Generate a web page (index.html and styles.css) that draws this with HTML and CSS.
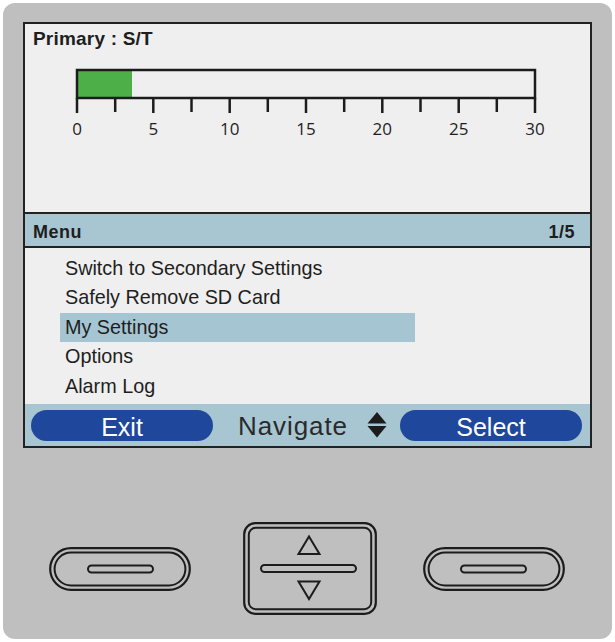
FILE: index.html
```html
<!DOCTYPE html>
<html lang="en">
<head>
<meta charset="utf-8">
<title>Menu</title>
<link rel="stylesheet" href="styles.css">
</head>
<body>
<div class="device">
  <div class="screen">
    <div class="status">
      <div class="title">Primary : S/T</div>
      <svg class="gauge" width="480" height="74" viewBox="0 0 480 74">
        <rect x="7" y="4" width="55" height="28" fill="#4caf47"/>
        <rect x="7" y="4" width="458" height="28" fill="none" stroke="#1c1c1c" stroke-width="2.5"/>
        <g stroke="#1c1c1c" stroke-width="2.5">
          <line x1="7" y1="32" x2="7" y2="47"/>
          <line x1="45.2" y1="32" x2="45.2" y2="46"/>
          <line x1="83.3" y1="32" x2="83.3" y2="47"/>
          <line x1="121.5" y1="32" x2="121.5" y2="46"/>
          <line x1="159.7" y1="32" x2="159.7" y2="47"/>
          <line x1="197.8" y1="32" x2="197.8" y2="46"/>
          <line x1="236" y1="32" x2="236" y2="47"/>
          <line x1="274.2" y1="32" x2="274.2" y2="46"/>
          <line x1="312.3" y1="32" x2="312.3" y2="47"/>
          <line x1="350.5" y1="32" x2="350.5" y2="46"/>
          <line x1="388.7" y1="32" x2="388.7" y2="47"/>
          <line x1="426.8" y1="32" x2="426.8" y2="46"/>
          <line x1="465" y1="32" x2="465" y2="47"/>
        </g>
        <g class="scale" text-anchor="middle">
          <text x="7" y="68.5">0</text>
          <text x="83.3" y="68.5">5</text>
          <text x="159.7" y="68.5">10</text>
          <text x="236" y="68.5">15</text>
          <text x="312.3" y="68.5">20</text>
          <text x="388.7" y="68.5">25</text>
          <text x="465" y="68.5">30</text>
        </g>
      </svg>
    </div>
    <div class="menu-head">
      <span>Menu</span>
      <span>1/5</span>
    </div>
    <ul class="menu-list">
      <li class="item">Switch to Secondary Settings</li>
      <li class="item">Safely Remove SD Card</li>
      <li class="item selected">My Settings</li>
      <li class="item">Options</li>
      <li class="item">Alarm Log</li>
    </ul>
    <div class="softkeys">
      <div class="pill">Exit</div>
      <div class="nav">
        <span class="nav-label">Navigate</span>
        <svg class="nav-icon" width="20" height="26" viewBox="0 0 20 26">
          <polygon points="10,0 19.5,11.5 0.5,11.5" fill="#1c1c1c"/>
          <polygon points="0.5,14 19.5,14 10,25.5" fill="#1c1c1c"/>
        </svg>
      </div>
      <div class="pill">Select</div>
    </div>
  </div>
  <div class="keys">
    <svg class="key key-left" width="142" height="44" viewBox="0 0 142 44">
      <rect x="1.2" y="1.2" width="139.6" height="41.6" rx="20.8" fill="none" stroke="#1c1c1c" stroke-width="2.2"/>
      <rect x="5.6" y="5.6" width="130.8" height="32.8" rx="16.4" fill="none" stroke="#1c1c1c" stroke-width="2"/>
      <rect x="39" y="18.5" width="65" height="7" rx="3.5" fill="none" stroke="#1c1c1c" stroke-width="2"/>
    </svg>
    <svg class="key key-mid" width="134" height="93" viewBox="0 0 134 93">
      <rect x="1.2" y="1.2" width="131.6" height="90.6" rx="11" fill="none" stroke="#1c1c1c" stroke-width="2.2"/>
      <rect x="5.8" y="5.8" width="122.4" height="81.4" rx="7" fill="none" stroke="#1c1c1c" stroke-width="2"/>
      <polygon points="66,14.5 76.5,32 55.5,32" fill="none" stroke="#1c1c1c" stroke-width="2"/>
      <polygon points="55.5,59.5 76.5,59.5 66,77" fill="none" stroke="#1c1c1c" stroke-width="2"/>
      <rect x="18" y="43" width="95" height="7" rx="3.5" fill="none" stroke="#1c1c1c" stroke-width="2"/>
    </svg>
    <svg class="key key-right" width="142" height="44" viewBox="0 0 142 44">
      <rect x="1.2" y="1.2" width="139.6" height="41.6" rx="20.8" fill="none" stroke="#1c1c1c" stroke-width="2.2"/>
      <rect x="5.6" y="5.6" width="130.8" height="32.8" rx="16.4" fill="none" stroke="#1c1c1c" stroke-width="2"/>
      <rect x="38" y="18.5" width="65" height="7" rx="3.5" fill="none" stroke="#1c1c1c" stroke-width="2"/>
    </svg>
  </div>
</div>
</body>
</html>
```

FILE: styles.css
```css
html, body {
  margin: 0;
  padding: 0;
  background: #ffffff;
}

body {
  font-family: "Liberation Sans", Arial, sans-serif;
  color: #222222;
}

.device {
  box-sizing: border-box;
  margin: 3px 0 0 3px;
  width: 609px;
  height: 636px;
  background: #c0bfc0;
  border-radius: 12px;
  padding: 19px 0 0 20px;
}

.screen {
  box-sizing: border-box;
  width: 569px;
  height: 426px;
  border: 2px solid #222222;
  background: #efefef;
  display: flex;
  flex-direction: column;
}

.status {
  box-sizing: border-box;
  height: 188px;
  padding: 4px 8px 0 8px;
}

.title {
  font-weight: bold;
  font-size: 19px;
  line-height: 22px;
  color: #1e1e1e;
  letter-spacing: 0.2px;
}

.gauge {
  display: block;
  margin: 16px 0 0 37px;
}

.scale text {
  font-family: "Open Sans", "Liberation Sans", sans-serif;
  font-size: 17px;
  fill: #1e1e1e;
}

.menu-head {
  box-sizing: border-box;
  height: 36px;
  border-top: 2px solid #222222;
  border-bottom: 2px solid #222222;
  background: #a8c6d2;
  display: flex;
  justify-content: space-between;
  padding: 4px 15px 0 8px;
  font-weight: bold;
  font-size: 18px;
  line-height: 28px;
  color: #1e1e1e;
  letter-spacing: 0.5px;
}

.menu-list {
  box-sizing: border-box;
  list-style: none;
  margin: 0;
  height: 156px;
  padding: 5.5px 0 0 35px;
}

.item {
  width: 355px;
  box-sizing: border-box;
  height: 29.5px;
  line-height: 29.5px;
  padding-left: 5px;
  font-size: 19.8px;
  color: #1e1e1e;
}

.item.selected {
  background: #a5c5d3;
}

.softkeys {
  flex: 1;
  background: #a8c6d2;
  display: flex;
  align-items: center;
  padding: 0 8px 0 6px;
}

.pill {
  box-sizing: border-box;
  width: 182px;
  height: 31px;
  border-radius: 16px;
  background: #1f479b;
  color: #ffffff;
  font-size: 25px;
  line-height: 31px;
  padding-top: 2px;
  text-align: center;
}

.nav {
  flex: 1;
  display: flex;
  align-items: center;
  justify-content: center;
  gap: 19px;
  padding-left: 12px;
}

.nav-label {
  font-size: 26px;
  letter-spacing: 0.9px;
  color: #2a2a2a;
  line-height: 31px;
  padding-top: 3px;
}

.nav-icon {
  display: block;
}

.keys {
  display: flex;
  align-items: center;
  margin-top: 74px;
  padding-left: 26px;
  height: 93px;
}

.key {
  display: block;
  flex: none;
}

.key-mid {
  margin: 0 46px 0 52px;
}
```
